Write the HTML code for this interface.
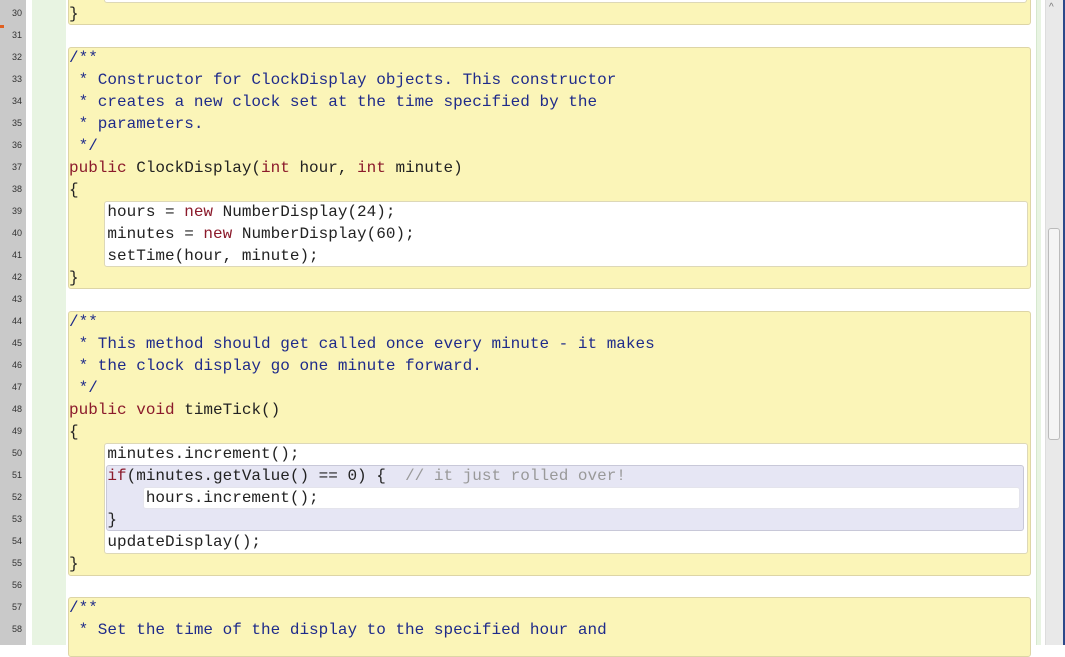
<!DOCTYPE html><html><head><style>
body{margin:0;width:1065px;height:645px;overflow:hidden;background:#fff;position:relative;font-family:"Liberation Mono",monospace;}
.a{position:absolute}
.g{left:0;top:0;width:26px;height:645px;background:#c9c9c9}
.ln{position:absolute;left:6px;width:16px;text-align:right;font:9px "Liberation Sans",sans-serif;color:#333}
.box{position:absolute;left:68px;width:963px;background:#fbf5b8;border:1px solid #ddd5a6;border-radius:3px;box-sizing:border-box}
.w{position:absolute;background:#fff;border:1px solid #ddd8b8;border-radius:3px;box-sizing:border-box}
.t{position:absolute;left:69px;font-size:16px;line-height:22px;white-space:pre;color:#222}
.c{color:#1f2b8a}.k{color:#8b1a2b}.cm{color:#999}
</style></head><body>
<div class="a g"></div>
<div class="a" style="left:32px;top:0;width:34px;height:645px;background:#e8f4e2"></div>
<div class="a" style="left:1036px;top:0;width:4px;height:645px;background:#e8f4e2;border-left:1px solid #d6e8cf"></div>
<div class="a" style="left:1045px;top:0;width:18px;height:645px;background:#e9e9e9;border-left:1px solid #ddd"></div>
<div class="a" style="left:1048px;top:228px;width:12px;height:212px;background:#f4f4f4;border:1px solid #bbb;border-radius:3px;box-sizing:border-box"></div>
<div class="a" style="left:1063px;top:0;width:2px;height:645px;background:#2c4a8a"></div>
<div class="a" style="left:1049px;top:2px;font:10px sans-serif;color:#777">^</div>
<div class="a" style="left:0;top:25px;width:4px;height:3px;background:#e06020"></div>

<div class="box" style="top:-5px;height:30px"></div>
<div class="w" style="left:104px;top:-5px;width:923px;height:8px"></div>
<div class="box" style="top:47px;height:242px"></div>
<div class="w" style="left:104px;top:201px;width:924px;height:66px"></div>
<div class="box" style="top:311px;height:265px"></div>
<div class="w" style="left:104px;top:443px;width:924px;height:111px"></div>
<div class="a" style="left:106px;top:465px;width:918px;height:66px;background:#e6e6f4;border:1px solid #c8c8d8;border-radius:3px;box-sizing:border-box"></div>
<div class="w" style="left:143px;top:487px;width:877px;height:22px;border-color:#e4e4ec"></div>
<div class="box" style="top:597px;height:60px"></div>

<div class="t" style="top:3px">}</div>
<div class="t c" style="top:47px">/**
 * Constructor for ClockDisplay objects. This constructor
 * creates a new clock set at the time specified by the
 * parameters.
 */</div>
<div class="t" style="top:157px"><span class="k">public</span> ClockDisplay(<span class="k">int</span> hour, <span class="k">int</span> minute)
{
    hours = <span class="k">new</span> NumberDisplay(24);
    minutes = <span class="k">new</span> NumberDisplay(60);
    setTime(hour, minute);
}</div>
<div class="t c" style="top:311px">/**
 * This method should get called once every minute - it makes
 * the clock display go one minute forward.
 */</div>
<div class="t" style="top:399px"><span class="k">public</span> <span class="k">void</span> timeTick()
{
    minutes.increment();
    <span class="k">if</span>(minutes.getValue() == 0) {  <span class="cm">// it just rolled over!</span>
        hours.increment();
    }
    updateDisplay();
}</div>
<div class="t c" style="top:597px">/**
 * Set the time of the display to the specified hour and</div>

<div class="ln" style="top:8px">30</div><div class="ln" style="top:30px">31</div><div class="ln" style="top:52px">32</div><div class="ln" style="top:74px">33</div><div class="ln" style="top:96px">34</div><div class="ln" style="top:118px">35</div><div class="ln" style="top:140px">36</div><div class="ln" style="top:162px">37</div><div class="ln" style="top:184px">38</div><div class="ln" style="top:206px">39</div><div class="ln" style="top:228px">40</div><div class="ln" style="top:250px">41</div><div class="ln" style="top:272px">42</div><div class="ln" style="top:294px">43</div><div class="ln" style="top:316px">44</div><div class="ln" style="top:338px">45</div><div class="ln" style="top:360px">46</div><div class="ln" style="top:382px">47</div><div class="ln" style="top:404px">48</div><div class="ln" style="top:426px">49</div><div class="ln" style="top:448px">50</div><div class="ln" style="top:470px">51</div><div class="ln" style="top:492px">52</div><div class="ln" style="top:514px">53</div><div class="ln" style="top:536px">54</div><div class="ln" style="top:558px">55</div><div class="ln" style="top:580px">56</div><div class="ln" style="top:602px">57</div><div class="ln" style="top:624px">58</div>
</body></html>
